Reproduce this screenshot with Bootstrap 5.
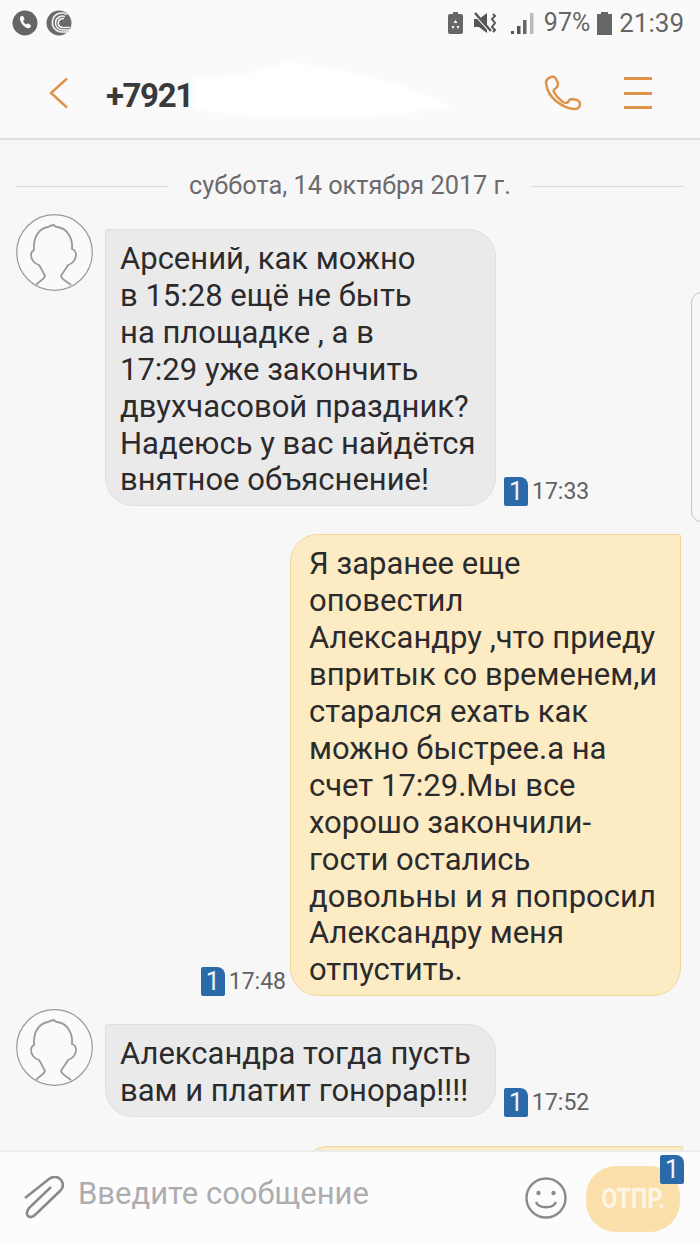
<!DOCTYPE html>
<html lang="ru">
<head>
  <meta charset="UTF-8">
  <title>Сообщения</title>
  <link href="https://cdn.jsdelivr.net/npm/bootstrap@5.3.0/dist/css/bootstrap.min.css" rel="stylesheet">
  <style>
    html, body { margin: 0; background: #f8f7f8; }
    body { font-family: Roboto, "Liberation Sans", sans-serif; color: #2b2b2d; overflow: hidden; }
    .phone { width: 700px; height: 1244px; overflow: hidden; position: relative; }

    .top-area { height: 140px; background: #fbfafb; border-bottom: 2px solid #dfdedf; }
    .status-row { height: 48px; padding: 5px 16px 0 12px; color: #666; }
    .status-left { padding-top: 5px; }
    .status-txt { font-size: 26px; line-height: 36px; color: #666; }
    .pct-txt { font-size: 25px; margin-left: 10px; }
    .ic-recycle { margin-right: 11px; }
    .ic-vib { margin-right: 13px; }
    .ic-batt { margin: 0 7px; }
    .head-row { height: 90px; padding: 0 48px 0 49px; }
    .phone-num { font-size: 33px; font-weight: 700; color: #3a3a3c; margin: 5px 0 0 37px; line-height: 40px; letter-spacing: -1.4px; }
    .ic-call { margin-bottom: 1px; }
    .menu-stack { margin-left: 42px; gap: 11.500px; }
    .menu-bar { width: 28px; height: 3px; background: #de9348; }
    .smear { position: absolute; left: 190px; top: 62px; width: 290px; height: 62px; pointer-events: none; filter: blur(2px); }

    .chat-area { height: 1010px; overflow: hidden; position: relative; padding: 0 16px; }
    .date-row { height: 46px; margin-top: 23px; gap: 20px; color: #6b6a6c; font-size: 25.300px; }
    .date-row hr { flex: 1; margin: 0; border: 0; border-top: 1px solid #dcdbdc; opacity: 1; }

    .msg-first { margin-top: 20px; }
    .msg-next { margin-top: 28px; }
    .msg-out { margin-right: 3px; }
    .msg-cut { margin-top: 29px; margin-right: 1px; }
    .ava { width: 77px; height: 77px; flex: none; margin-top: -15px; margin-right: 12px; }
    .bubble { width: 391px; font-size: 31px; line-height: 36.900px; flex: none; }
    .bubble-in { background: #ebeaeb; border: 1px solid #e0dfe0; border-radius: 2px 28px 28px 28px; padding: 11px 14px 6px 14px; }
    .bubble-out { background: #fdebc4; border: 1px solid #efd69c; border-radius: 28px 2px 28px 28px; padding: 11px 14px 6px 18px; }
    .bubble-cut { width: 383px; height: 60px; }
    .meta-txt { font-size: 23px; line-height: 28px; color: #626163; }
    .sim-tag { width: 24px; height: 29px; background: #2a6aa8; color: #f3f6fa; font-size: 25px; line-height: 29px; text-align: center; border-radius: 2px 8px 2px 2px; flex: none; }
    .side-handle { position: absolute; right: -12px; top: 152px; width: 21px; height: 230px; border: 1px solid #c4c3c4; border-radius: 12px; }

    .bottom-area { position: absolute; left: 0; right: 0; bottom: 0; height: 94px; background: #fdfcfd; border-top: 2px solid #ecebec; padding: 0 20px 0 24px; }
    .hint-txt { font-size: 31px; color: #adacae; margin: 0 0 8px 14px; }
    .send-btn { width: 94px; height: 66px; border-radius: 30px; background: #fbe0ac; color: #fdf6e8; font-size: 27px; font-weight: 700; border: 0; padding: 0; }
    .send-btn span { display: inline-block; transform: scaleX(.86); }
    .send-wrap { position: relative; margin-left: 19px; margin-top: 2px; }
    .send-wrap .sim-tag { position: absolute; right: -4px; top: -11px; }
  </style>
</head>
<body>
<div class="phone">
  <div class="top-area">
    <div class="status-row d-flex align-items-start justify-content-between">
      <div class="status-left d-flex gap-2">
        <svg width="26" height="26" viewBox="0 0 26 26"><circle cx="13" cy="13" r="12.5" fill="#666"/><path d="M8.5 6.5l2.5-.7 1.6 3.6-1.5 1.3c.6 1.6 1.6 2.9 3.2 3.7l1.5-1.2 3.2 2.2-.9 2.3c-1.2.8-3 .6-5-.7-2.800-1.900-4.900-5.300-5.200-8-.1-1 .1-1.700.6-2.300z" fill="#fff"/></svg>
        <svg width="26" height="26" viewBox="0 0 26 26"><circle cx="13" cy="13" r="12.500" fill="#6a6a6a"/><g fill="none" stroke="#f4f4f4" stroke-width="1.600"><path d="M25 20H17a7 7 0 1 1 2-13.500"/><path d="M25 22H16A9.500 9.500 0 1 1 21 4.500"/><path d="M24 17.500H17a4.500 4.500 0 1 1 1-8.800"/></g></svg>
      </div>
      <div class="d-flex align-items-center">
        <svg class="ic-recycle" width="15" height="22" viewBox="0 0 15 22"><path d="M5 0h5v2h3a2 2 0 0 1 2 2v16a2 2 0 0 1-2 2H2a2 2 0 0 1-2-2V4a2 2 0 0 1 2-2h3z" fill="#666"/><path d="M7.500 8l2 3h-4zM3.500 14h3l-1.500 3zM11.500 14h-3l1.500 3z" fill="#fff"/></svg>
        <svg class="ic-vib" width="24" height="22" viewBox="0 0 24 22"><path d="M0 7h5l8-6v20l-8-6H0z" fill="#555"/><path d="M1 2l15 17" stroke="#fbfafb" stroke-width="3"/><path d="M1 1l16 18" stroke="#555" stroke-width="2.500"/><path d="M19 2l2 2-3 3 3 4-3 4 3 3-2 2" fill="none" stroke="#555" stroke-width="2"/></svg>
        <svg width="23" height="24" viewBox="0 0 23 24"><rect x="0" y="20" width="3" height="3" fill="#555"/><rect x="6" y="15" width="3.500" height="8" fill="#555"/><rect x="12" y="9" width="3.500" height="14" fill="#666"/><rect x="19" y="2" width="3.500" height="21" fill="#bbb"/></svg>
        <span class="status-txt pct-txt">97%</span>
        <svg class="ic-batt" width="15" height="23" viewBox="0 0 15 23"><path d="M4 0h7v2h4v21H0V2h4z" fill="#666"/></svg>
        <span class="status-txt">21:39</span>
      </div>
    </div>
    <div class="head-row d-flex align-items-center">
      <svg width="20" height="32" viewBox="0 0 20 32"><path d="M18 1.500L2 16l16 14.500" fill="none" stroke="#de9348" stroke-width="2.500"/></svg>
      <span class="phone-num flex-grow-1">+7921</span>
      <svg class="ic-call" width="38" height="36" viewBox="0 0 38 36"><path d="M7 2c-3 1-5 3-5 6 1 8 5 14 10 18 5 4 12 8 19 8 3 0 5-2 5-5 0-2-1-3-3-4l-5-1c-2 0-3 1-4 3-1 2-3 1-5 0-4-3-7-6-9-10-1-2 0-3 2-4 2-1 2-3 2-5l-2-4c-1-2-3-3-5-2z" fill="none" stroke="#de9348" stroke-width="2.500"/></svg>
      <div class="menu-stack d-flex flex-column">
        <div class="menu-bar"></div><div class="menu-bar"></div><div class="menu-bar"></div>
      </div>
    </div>
  </div>
  <svg class="smear" viewBox="0 0 290 62"><path d="M4 14C40 18 70 10 95 0c20 2 60 6 110 22 30 8 50 22 60 24-40 2-70 10-120 8C90 62 40 50 4 48z" fill="#ffffff"/></svg>

  <div class="chat-area">
    <div class="date-row d-flex align-items-center"><hr><span>суббота, 14 октября 2017 г.</span><hr></div>
    <div class="side-handle"></div>

    <div class="msg-first d-flex align-items-start">
      <svg class="ava" viewBox="0 0 77 77"><use href="#ava-shape"/></svg>
      <div class="bubble bubble-in">Арсений, как можно<br>в 15:28 ещё не быть<br>на площадке , а в<br>17:29 уже закончить<br>двухчасовой праздник?<br>Надеюсь у вас найдётся<br>внятное объяснение!</div>
      <div class="d-flex align-items-center align-self-end ms-2">
        <div class="sim-tag">1</div><span class="meta-txt ms-1">17:33</span>
      </div>
    </div>

    <div class="msg-next msg-out d-flex justify-content-end align-items-end">
      <div class="d-flex align-items-center me-1">
        <div class="sim-tag">1</div><span class="meta-txt ms-1">17:48</span>
      </div>
      <div class="bubble bubble-out">Я заранее еще<br>оповестил<br>Александру ,что приеду<br>впритык со временем,и<br>старался ехать как<br>можно быстрее.а на<br>счет 17:29.Мы все<br>хорошо закончили-<br>гости остались<br>довольны и я попросил<br>Александру меня<br>отпустить.</div>
    </div>

    <div class="msg-next d-flex align-items-start">
      <svg class="ava" viewBox="0 0 77 77"><use href="#ava-shape"/></svg>
      <div class="bubble bubble-in">Александра тогда пусть<br>вам и платит гонорар!!!!</div>
      <div class="d-flex align-items-center align-self-end ms-2">
        <div class="sim-tag">1</div><span class="meta-txt ms-1">17:52</span>
      </div>
    </div>

    <div class="msg-cut d-flex justify-content-end">
      <div class="bubble bubble-out bubble-cut"></div>
    </div>
  </div>

  <div class="bottom-area d-flex align-items-center">
    <svg width="40" height="44" viewBox="0 0 40 44"><path d="M1 22L25 3c4-3 9-3 12 1s2 8-1 11L12 38c-3 3-6 4-8 2s-1-5 1-8L27 11" fill="none" stroke="#8a898b" stroke-width="2.600"/></svg>
    <span class="hint-txt flex-grow-1">Введите сообщение</span>
    <svg width="42" height="42" viewBox="0 0 42 42"><circle cx="21" cy="21" r="19.500" fill="none" stroke="#8a898b" stroke-width="2.400"/><circle cx="13.500" cy="16" r="2.200" fill="#8a898b"/><circle cx="28.500" cy="16" r="2.200" fill="#8a898b"/><path d="M11 25c3 7 17 7 20 0" fill="none" stroke="#8a898b" stroke-width="2.400"/></svg>
    <div class="send-wrap">
      <button class="send-btn" type="button"><span>ОТПР.</span></button>
      <div class="sim-tag">1</div>
    </div>
  </div>
</div>
<svg width="0" height="0" class="position-absolute">
  <defs>
    <g id="ava-shape">
      <circle cx="38.500" cy="38.500" r="37.800" fill="#fbfafb" stroke="#9a999b" stroke-width="1.200"/>
      <path d="M20 71C23 67 28 66 29 62C27 58 25 54 23 51C19 50 15 46 15 41C15 38 16 37 18 36C17 22 24 14 32 13C34 12 36 11 38 11C39 12 39 13 41 13C51 14 57 24 56 35C59 36 60 38 60 41C60 46 56 50 52 51C50 55 47 58 45 62C46 66 52 68 55 71" fill="none" stroke="#9a999b" stroke-width="1.800"/>
    </g>
  </defs>
</svg>
</body>
</html>
